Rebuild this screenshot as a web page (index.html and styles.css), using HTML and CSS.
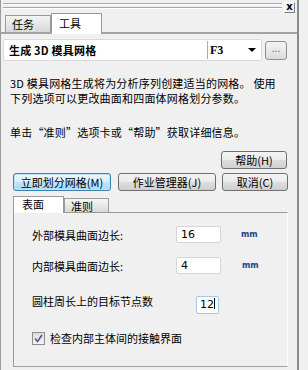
FILE: index.html
```html
<!DOCTYPE html>
<html>
<head>
<meta charset="utf-8">
<link rel="stylesheet" href="styles.css">
</head>
<body>
<div class="window">
  <div class="main">
    <div class="grip">
      <div class="grip-lines"></div>
      <div class="close">x</div>
    </div>
    <div class="tabs">
      <div class="tab">任务</div>
      <div class="tab active">工具</div>
    </div>
    <div class="combo-row">
      <div class="combo">
        <span class="combo-title">生成 3D 模具网格</span>
        <span class="combo-key">F3</span>
        <span class="combo-arrow"></span>
      </div>
      <div class="dots">...</div>
    </div>
    <p class="desc">3D 模具网格生成将为分析序列创建适当的网格。 使用<br>下列选项可以更改曲面和四面体网格划分参数。</p>
    <p class="desc info">单击“准则”选项卡或“帮助”获取详细信息。</p>
    <div class="btn-help-row">
      <button class="btn btn-small">帮助(H)</button>
    </div>
    <div class="btn-row">
      <button class="btn primary btn-wide">立即划分网格(M)</button>
      <button class="btn btn-wide">作业管理器(J)</button>
      <button class="btn btn-small">取消(C)</button>
    </div>
    <div class="subtabs">
      <div class="subtab active">表面</div>
      <div class="subtab">准则</div>
    </div>
    <div class="panel">
      <div class="field">
        <span class="label">外部模具曲面边长:</span>
        <span class="input w45">16</span>
        <span class="unit">mm</span>
      </div>
      <div class="field f2">
        <span class="label">内部模具曲面边长:</span>
        <span class="input w45">4</span>
        <span class="unit">mm</span>
      </div>
      <div class="field f3">
        <span class="label">圆柱周长上的目标节点数</span>
        <span class="input focus">12<i class="caret"></i></span>
      </div>
      <div class="check-row">
        <span class="checkbox"><svg width="9" height="9" viewBox="0 0 9 9"><path d="M1 4.5 L3.5 7.5 L8 1" fill="none" stroke="#4a5a8a" stroke-width="1.6"/></svg></span>
        <span>检查内部主体间的接触界面</span>
      </div>
    </div>
  </div>
</div>
</body>
</html>
```

FILE: styles.css
```css
* { box-sizing: border-box; }
html, body { margin: 0; padding: 0; }
body {
  width: 308px;
  height: 370px;
  overflow: hidden;
  background: #f0f0f0;
  font-family: "Noto Sans CJK SC", "DejaVu Sans", sans-serif;
  font-size: 11px;
  color: #000;
}
.window { display: flex; height: 370px; }
.main {
  width: 299px;
  height: 370px;
  border-left: 1px solid #9c9c9c;
  border-right: 2px solid #8a8a8a;
  position: relative;
}
.grip { display: flex; height: 13px; padding: 2px 1px 0 2px; }
.grip-lines {
  flex: 1;
  height: 5px;
  margin-top: 1px;
  border-top: 1px solid #a8a8a8;
  border-bottom: 1px solid #a8a8a8;
  box-shadow: inset 0 1px 0 #fff, 0 1px 0 #fff;
}
.close {
  width: 11px;
  height: 11px;
  margin-left: 2px;
  margin-right: 1px;
  border: 1px solid #fff;
  border-right-color: #808080;
  border-bottom-color: #808080;
  font: bold 10px/8px "DejaVu Sans", sans-serif;
  text-align: center;
}
.tabs {
  display: flex;
  align-items: flex-end;
  height: 21px;
  padding-left: 4px;
  border-bottom: 2px solid #a3a3a3;
}
.tab {
  width: 46px;
  height: 17px;
  border: 1px solid #9a9a9a;
  border-bottom: none;
  background: linear-gradient(#f4f4f4, #d8d8d8);
  padding-left: 6px;
  line-height: 16px;
  font-size: 11px;
}
.tab.active {
  width: 51px;
  height: 21px;
  background: #fff;
  margin-bottom: -2px;
  padding-left: 7px;
  line-height: 18px;
  border-color: #9a9a9a;
}
.combo-row {
  display: flex;
  align-items: center;
  margin-top: 5px;
  padding-left: 2px;
}
.combo {
  width: 259px;
  height: 22px;
  background: #fff;
  border: 1px solid #d9d9d9;
  border-radius: 2px;
  display: flex;
  align-items: center;
  font-weight: bold;
  font-size: 11px;
}
.combo-title { width: 204px; padding-left: 5px; height: 18px; line-height: 18px; border-right: 1px solid #aaa; letter-spacing: 0.2px; }
.combo-key { flex: 1; padding-left: 2px; font-family: "Liberation Serif", serif; font-size: 12px; }
.combo-arrow {
  width: 0; height: 0;
  border-left: 4px solid transparent;
  border-right: 4px solid transparent;
  border-top: 4px solid #000;
  margin-right: 5px;
}
.dots {
  width: 22px;
  height: 19px;
  margin-left: 3px;
  border: 1px solid #8f8f8f;
  border-radius: 3px;
  background: linear-gradient(#f3f3f3, #dcdcdc);
  color: #3b6bb0;
  text-align: center;
  line-height: 12px;
  font-size: 10px;
}
.desc {
  margin: 15px 0 0 9px;
  line-height: 15px;
  font-size: 11px;
  letter-spacing: 0.2px;
}
.desc.info { margin-top: 19px; }
.btn-help-row { display: flex; justify-content: flex-end; margin-top: 11px; padding-right: 10px; }
.btn {
  font-family: "Noto Sans CJK SC", sans-serif;
  font-size: 11px;
  height: 18px;
  padding: 0;
  line-height: 15px;
  border: 1px solid #707070;
  border-radius: 3px;
  background: linear-gradient(#f3f3f3 0%, #ebebeb 50%, #dddddd 51%, #d0d0d0 100%);
  color: #000;
}
.btn-small { width: 66px; }
.btn-wide { width: 98px; }
.btn.primary { border-color: #3c7fb1; background: linear-gradient(#eaf6fd 0%, #d9f0fc 50%, #bee6fd 51%, #a7d9f5 100%); box-shadow: inset 0 0 0 1px #bfe3f8; }
.btn-row { display: flex; gap: 7px; margin-top: 4px; padding-left: 12px; }
.btn-row .btn:last-child { margin-left: -1px; }
.subtabs { display: flex; align-items: flex-end; height: 17px; margin-top: 4px; padding-left: 12px; }
.subtab {
  width: 45px;
  height: 14px;
  border: 1px solid #9a9a9a;
  border-bottom: none;
  background: linear-gradient(#f6f6f6, #dadada);
  padding-left: 6px;
  line-height: 14px;
}
.subtab.active {
  width: 51px;
  height: 17px;
  background: #fff;
  position: relative;
  z-index: 1;
  margin-bottom: -1px;
  padding-left: 8px;
  line-height: 15px;
}
.panel {
  margin-left: 12px;
  width: 275px;
  height: 155px;
  border: 1px solid #9a9a9a;
  border-right-color: #fbfbfb;
  border-bottom-color: #a0a0a0;
  padding: 13px 0 0 18px;
}
.field { display: flex; align-items: center; height: 17px; }
.f2 { margin-top: 14px; }
.f3 { margin-top: 22px; align-items: flex-start; }
.label { width: 144px; }
.f3 .label { width: 164px; line-height: 12px; margin-top: -1px; }
.input {
  width: 45px;
  height: 17px;
  background: #fff;
  border: 1px solid #d5d5d5;
  border-radius: 2px;
  padding-left: 4px;
  line-height: 15px;
  font-family: "DejaVu Sans", sans-serif;
  font-size: 11px;
}
.input.focus { width: 23px; height: 18px; border-color: #a8c8e8; padding-left: 3px; }
.caret { display: inline-block; width: 1px; height: 11px; background: #000; vertical-align: -1px; }
.unit {
  margin-left: 20px;
  font-family: "DejaVu Sans", sans-serif;
  font-size: 8px;
  font-weight: bold;
  color: #23438c;
}
.f2 .unit { margin-left: 21px; }
.check-row { display: flex; align-items: center; margin-top: 17px; gap: 5px; }
.checkbox {
  width: 13px; height: 13px;
  border: 1px solid #8e8f8f;
  background: linear-gradient(#dcdcdc, #f4f4f4);
  display: flex; align-items: center; justify-content: center;
}
```
